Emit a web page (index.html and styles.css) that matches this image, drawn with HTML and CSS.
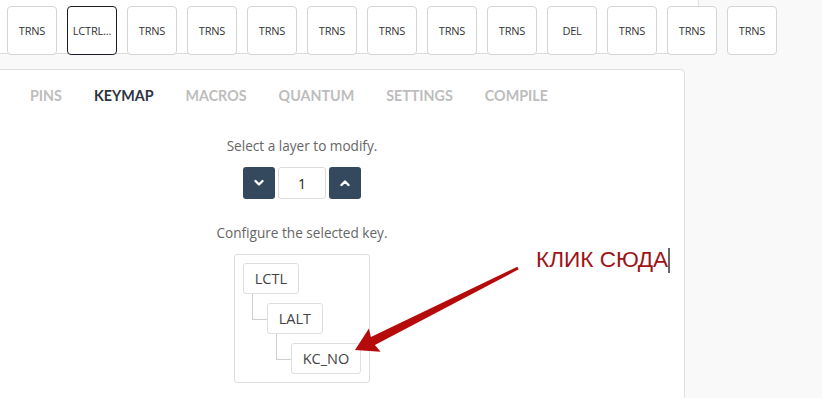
FILE: index.html
```html
<!DOCTYPE html>
<html>
<head>
<meta charset="utf-8">
<link rel="stylesheet" href="styles.css">
</head>
<body>
<div class="keyboard">
  <div class="keys">
    <div class="k">TRNS</div>
    <div class="k sel">LCTRL...</div>
    <div class="k">TRNS</div>
    <div class="k">TRNS</div>
    <div class="k">TRNS</div>
    <div class="k">TRNS</div>
    <div class="k">TRNS</div>
    <div class="k">TRNS</div>
    <div class="k">TRNS</div>
    <div class="k">DEL</div>
    <div class="k">TRNS</div>
    <div class="k">TRNS</div>
    <div class="k">TRNS</div>
  </div>
</div>
<div class="panel">
  <nav class="tabs">
    <span class="tab">PINS</span>
    <span class="tab active">KEYMAP</span>
    <span class="tab">MACROS</span>
    <span class="tab">QUANTUM</span>
    <span class="tab">SETTINGS</span>
    <span class="tab">COMPILE</span>
  </nav>
  <div class="content">
    <p class="label">Select a layer to modify.</p>
    <div class="layer">
      <button class="btn"><svg width="10" height="8" viewBox="0 0 10 8"><polyline points="1.5,2 5,5.5 8.5,2" fill="none" stroke="#fff" stroke-width="2.4" stroke-linecap="round" stroke-linejoin="round"/></svg></button>
      <div class="num">1</div>
      <button class="btn"><svg width="10" height="8" viewBox="0 0 10 8"><polyline points="1.5,6 5,2.5 8.5,6" fill="none" stroke="#fff" stroke-width="2.4" stroke-linecap="round" stroke-linejoin="round"/></svg></button>
    </div>
    <p class="label label2">Configure the selected key.</p>
    <div class="tree">
      <div class="node"><span class="key">LCTL</span>
        <div class="node child"><span class="key">LALT</span>
          <div class="node child"><span class="key">KC_NO</span></div>
        </div>
      </div>
    </div>
  </div>
</div>
<div class="note">КЛИК СЮДА<span class="caret"></span></div>
<svg class="arrow" width="822" height="398" viewBox="0 0 822 398">
  <polygon points="355,350 380.6,351.7 374.9,345 518.7,269.3 517.3,266.7 370.9,337 368.9,328.4" fill="#b50b0b"/>
</svg>
</body>
</html>
```
FILE: styles.css
```css
html, body {
  margin: 0;
  padding: 0;
}
body {
  background: #f9f9f9;
  width: 822px;
  height: 398px;
  overflow: hidden;
  position: relative;
  font-family: "Open Sans", "Liberation Sans", sans-serif;
}
.keyboard {
  width: 698px;
  height: 53px;
  background: #fff;
  border-right: 1px solid #e2e2e2;
  border-bottom: 1px solid #dcdcdc;
}
.keys {
  display: flex;
  gap: 10px;
  padding: 6px 0 0 7px;
  width: max-content;
}
.k {
  width: 50px;
  height: 49px;
  box-sizing: border-box;
  border: 1px solid #d4d4d4;
  border-radius: 4px;
  background: #fff;
  display: flex;
  align-items: center;
  justify-content: center;
  font-size: 11px;
  color: #333;
  letter-spacing: -0.2px;
}
.k.sel {
  border-color: #1c1c2a;
}
.panel {
  margin-top: 15px;
  width: 684px;
  height: 340px;
  background: #fff;
  border-top: 1px solid #dedede;
  border-right: 1px solid #dedede;
  border-top-right-radius: 5px;
}
.tabs {
  display: flex;
  padding: 17px 0 0 14px;
  font-family: Lato, "Liberation Sans", sans-serif;
  font-weight: 700;
  font-size: 14.3px;
  line-height: 18px;
}
.tab {
  padding: 0 16px;
  color: #bdbdbd;
}
.tab.active {
  color: #2d3440;
}
.content {
  width: 604px;
  text-align: center;
}
.label {
  margin: 32px 0 0;
  font-size: 13.6px;
  line-height: 18px;
  color: #666;
}
.label2 {
  margin-top: 25px;
}
.layer {
  display: flex;
  justify-content: center;
  gap: 3px;
  margin-top: 12px;
}
.btn {
  width: 32px;
  height: 32px;
  border: none;
  border-radius: 3px;
  background: #34495e;
  padding: 0;
  display: flex;
  align-items: center;
  justify-content: center;
}
.num {
  width: 48px;
  height: 32px;
  box-sizing: border-box;
  border: 1px solid #dcdcdc;
  border-radius: 3px;
  display: flex;
  align-items: center;
  justify-content: center;
  font-size: 14px;
  color: #222;
}
.tree {
  display: inline-block;
  margin-top: 12px;
  padding: 8px;
  border: 1px solid #dedede;
  border-radius: 3px;
  text-align: left;
}
.node {
  position: relative;
}
.key {
  display: inline-block;
  height: 31px;
  box-sizing: border-box;
  line-height: 29px;
  padding: 0 11px;
  border: 1px solid #dedede;
  border-radius: 3px;
  font-size: 14.5px;
  color: #444;
}
.child {
  margin-left: 24px;
  margin-top: 9px;
}
.child::before {
  content: "";
  position: absolute;
  left: -15px;
  top: -9px;
  width: 14px;
  height: 25px;
  border-left: 1px solid #cfcfcf;
  border-bottom: 1px solid #cfcfcf;
}
.note {
  position: absolute;
  left: 536px;
  top: 246px;
  font-family: "Liberation Sans", Arial, sans-serif;
  font-size: 22.6px;
  line-height: 28px;
  color: #9e1416;
  display: flex;
  align-items: center;
}
.caret {
  display: inline-block;
  width: 1.5px;
  height: 25px;
  background: #666;
  margin-left: 0;
}
.arrow {
  position: absolute;
  left: 0;
  top: 0;
  pointer-events: none;
}
```
